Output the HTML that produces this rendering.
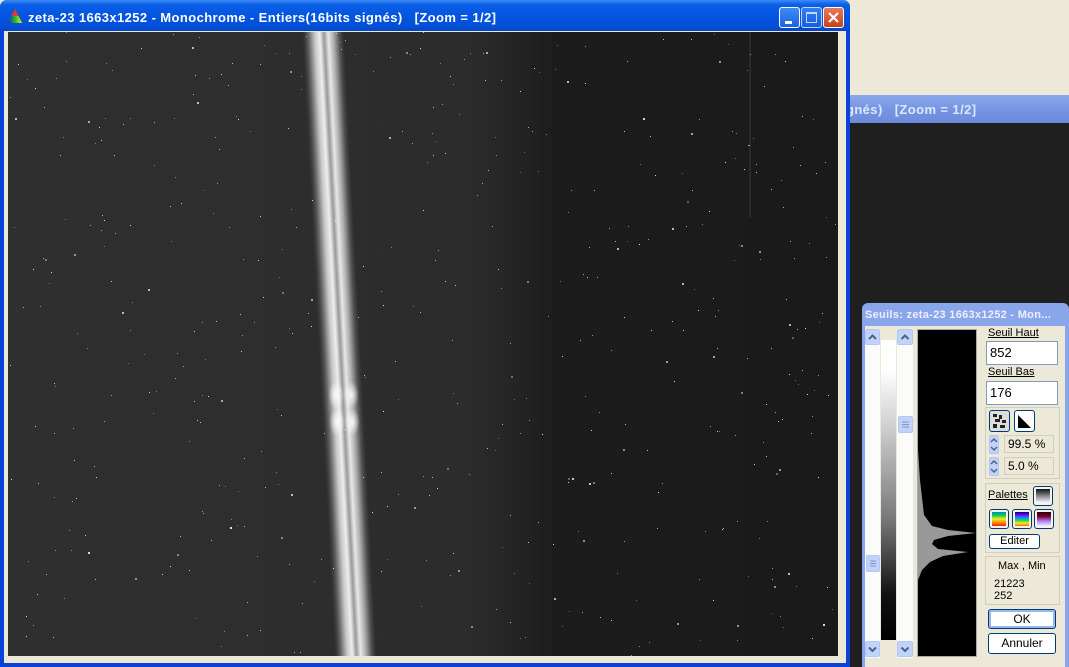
<!DOCTYPE html>
<html><head><meta charset="utf-8">
<style>
*{box-sizing:border-box;margin:0;padding:0}
body{width:1069px;height:667px;overflow:hidden;background:#ECE9D8;position:relative;font-family:"Liberation Sans",sans-serif;font-size:11px}
.abs{position:absolute}
.tb{font-family:"Liberation Sans",sans-serif;font-weight:bold;color:#fff;font-size:13px;white-space:nowrap}
.btn3{position:absolute;border:1px solid #fff;border-radius:3px;width:21px;height:21px}
.sb{position:absolute;background:#C1D3FB;border:1px solid #b4c7f0;border-radius:2px}
.inp{position:absolute;background:#fff;border:1px solid #7F9DB9;font-size:13px;padding-left:3px}
.grp{position:absolute;border:1px solid #d0d0bf}
.xb{position:absolute;background:#fff;border:1px solid #003C74;border-radius:3px;text-align:center;font-size:12px}
.pb{position:absolute;width:19px;height:19px;border:1px solid #003C74;border-radius:3px;background:#f4f3ee;padding:2px}
</style></head><body>

<div class="abs" style="left:846px;top:95px;width:223px;height:28px;background:linear-gradient(#8aa8eb,#7392e0 60%,#6d8bdc);"></div>
<div class="abs tb" style="left:846px;top:102px;color:#dfe7fb;letter-spacing:0.4px">gnés)&nbsp;&nbsp;&nbsp;[Zoom = 1/2]</div>
<div class="abs" style="left:850px;top:123px;width:219px;height:544px;background:#1f1f1f"></div>

<div class="abs" style="left:0;top:0;width:850px;height:667px;background:#0842d6;border-radius:7px 7px 0 0"></div>
<div class="abs" style="left:0;top:0;width:850px;height:31px;border-radius:7px 7px 0 0;background:linear-gradient(#3d8bf7 0%,#0a5fe6 15%,#0455e0 50%,#0350d8 85%,#0245c8 100%)"></div>
<svg class="abs" style="left:7px;top:8px" width="16" height="16"><defs><linearGradient id="rg" x1="0" x2="1"><stop offset="0" stop-color="#22c"/><stop offset=".5" stop-color="#2b2"/><stop offset="1" stop-color="#ee2"/></linearGradient></defs><polygon points="8,1 15,15 1,15" fill="#2a2"/><polygon points="8,1 11.5,8 4.5,8" fill="#e33"/><polygon points="1,15 4.5,8 11.5,8 15,15" fill="url(#rg)"/></svg>
<div class="abs tb" style="left:28px;top:10px;letter-spacing:0.4px">zeta-23 1663x1252 - Monochrome - Entiers(16bits signés)&nbsp;&nbsp;&nbsp;[Zoom = 1/2]</div>
<div class="btn3" style="left:779px;top:7px;background:linear-gradient(#3d8cf6,#1a62e6)"><div class="abs" style="left:5px;top:13px;width:7px;height:3px;background:#fff"></div></div>
<div class="btn3" style="left:801px;top:7px;background:linear-gradient(#3d8cf6,#1a62e6);opacity:.75"><div class="abs" style="left:4px;top:4px;width:11px;height:11px;border:1px solid #fff;border-top-width:2px"></div></div>
<div class="btn3" style="left:823px;top:7px;background:linear-gradient(#e8795a,#c7401c)"><svg width="19" height="19"><path d="M5 5L14 14M14 5L5 14" stroke="#fff" stroke-width="2.2"/></svg></div>
<div class="abs" style="left:4px;top:31px;width:842px;height:632px;background:#ECE9D8"></div>

<svg class="abs" style="left:8px;top:32px" width="830" height="624">
<defs>
<linearGradient id="bg" x1="0" x2="1"><stop offset="0" stop-color="#2f2f2f"/><stop offset=".55" stop-color="#2c2c2c"/><stop offset=".6" stop-color="#262626"/><stop offset=".66" stop-color="#1c1c1c"/><stop offset="1" stop-color="#1a1a1a"/></linearGradient>
<linearGradient id="beam" x1="0" x2="1"><stop offset="0" stop-color="#444" stop-opacity="0"/><stop offset=".15" stop-color="#666"/><stop offset=".3" stop-color="#c8c8c8"/><stop offset=".42" stop-color="#eee"/><stop offset=".52" stop-color="#999"/><stop offset=".62" stop-color="#e8e8e8"/><stop offset=".75" stop-color="#aaa"/><stop offset=".88" stop-color="#555"/><stop offset="1" stop-color="#444" stop-opacity="0"/></linearGradient>
<radialGradient id="glow"><stop offset="0" stop-color="#fff" stop-opacity=".9"/><stop offset="1" stop-color="#fff" stop-opacity="0"/></radialGradient>
</defs>
<rect width="830" height="624" fill="url(#bg)"/>
<g transform="skewX(3.0)">
<rect x="294" y="0" width="42" height="624" fill="url(#beam)"/>
</g>
<ellipse cx="328" cy="363" rx="8" ry="14" fill="url(#glow)"/>
<ellipse cx="343" cy="363" rx="8" ry="14" fill="url(#glow)"/>
<ellipse cx="329" cy="390" rx="8" ry="14" fill="url(#glow)"/>
<ellipse cx="344" cy="390" rx="8" ry="14" fill="url(#glow)"/>
<line x1="742" y1="0" x2="742" y2="185" stroke="#3a3a3a" stroke-width="1"/>
<g id="stars" fill="#ddd"></g>
</svg>

<div class="abs" style="left:862px;top:303px;width:207px;height:364px;background:#8aa6eb;border-radius:6px 6px 0 0"></div>
<div class="abs tb" style="left:865px;top:309px;font-size:11px;color:#eef;width:198px;overflow:hidden;letter-spacing:0.3px">Seuils: zeta-23 1663x1252 - Mon...</div>
<div class="abs" style="left:865px;top:326px;width:200px;height:341px;background:#ECE9D8"></div>
<div class="abs" style="left:865px;top:329px;width:15px;height:329px;background:#fbfbf9"></div>
<div class="sb" style="left:865px;top:329px;width:15px;height:16px"><svg width="13" height="14"><path d="M3 9L6.5 5.5L10 9" stroke="#4d6185" stroke-width="2" fill="none"/></svg></div>
<div class="sb" style="left:866px;top:555px;width:14px;height:17px"><svg width="12" height="15"><path d="M3 5h6M3 7.5h6M3 10h6" stroke="#7e95c4"/></svg></div>
<div class="sb" style="left:865px;top:641px;width:15px;height:16px"><svg width="13" height="14"><path d="M3 5.5L6.5 9L10 5.5" stroke="#4d6185" stroke-width="2" fill="none"/></svg></div>
<div class="abs" style="left:881px;top:340px;width:15px;height:300px;background:linear-gradient(#fff 0%,#fff 10%,#ccc 30%,#777 60%,#111 85%,#000 100%)"></div>
<div class="abs" style="left:897px;top:329px;width:16px;height:329px;background:#fbfbf9"></div>
<div class="sb" style="left:897px;top:329px;width:16px;height:16px"><svg width="14" height="14"><path d="M3.5 9L7 5.5L10.5 9" stroke="#4d6185" stroke-width="2" fill="none"/></svg></div>
<div class="sb" style="left:898px;top:416px;width:15px;height:17px"><svg width="13" height="15"><path d="M3 5h7M3 7.5h7M3 10h7" stroke="#7e95c4"/></svg></div>
<div class="sb" style="left:897px;top:641px;width:16px;height:16px"><svg width="14" height="14"><path d="M3.5 5.5L7 9L10.5 5.5" stroke="#4d6185" stroke-width="2" fill="none"/></svg></div>
<div class="abs" style="left:917px;top:329px;width:60px;height:328px;background:#000;border:1px solid #aaa"></div>
<svg class="abs" style="left:918px;top:330px" width="58" height="326"><path d="M0 120 L2 150 L6 185 L14 196 L30 200 L58 203 L30 206 L16 210 L14 214 L20 219 L50 222 L25 226 L12 232 L4 240 L0 250 Z" fill="#999"/></svg>
<div class="abs" style="left:988px;top:327px;font-size:11px;text-decoration:underline">Seuil Haut</div>
<div class="inp" style="left:986px;top:341px;width:72px;height:24px;line-height:22px">852</div>
<div class="abs" style="left:988px;top:366px;font-size:11px;text-decoration:underline">Seuil Bas</div>
<div class="inp" style="left:986px;top:381px;width:72px;height:24px;line-height:22px">176</div>
<div class="grp" style="left:985px;top:407px;width:75px;height:72px"></div>
<div class="pb" style="left:989px;top:410px;width:21px;height:22px;background:#ddd"><svg width="15" height="16"><g fill="#222"><rect x="1" y="1" width="4" height="3"/><rect x="7" y="2" width="3" height="4"/><rect x="3" y="6" width="5" height="3"/><rect x="10" y="7" width="4" height="3"/><rect x="1" y="11" width="4" height="4"/><rect x="8" y="12" width="5" height="3"/></g></svg></div>
<div class="pb" style="left:1014px;top:410px;width:21px;height:22px;background:#fff"><svg width="15" height="16"><polygon points="1,2 14,15 1,15" fill="#000"/></svg></div>
<div class="sb" style="left:989px;top:435px;width:10px;height:19px"><svg width="8" height="17"><path d="M1 6L4 3L7 6M1 11L4 14L7 11" stroke="#4d6185" stroke-width="1.5" fill="none"/></svg></div>
<div class="abs" style="left:1004px;top:435px;width:50px;height:18px;border:1px solid #d0d0bf;font-size:12px;padding-left:3px;line-height:16px">99.5 %</div>
<div class="sb" style="left:989px;top:457px;width:10px;height:19px"><svg width="8" height="17"><path d="M1 6L4 3L7 6M1 11L4 14L7 11" stroke="#4d6185" stroke-width="1.5" fill="none"/></svg></div>
<div class="abs" style="left:1004px;top:457px;width:50px;height:18px;border:1px solid #d0d0bf;font-size:12px;padding-left:3px;line-height:16px">5.0 %</div>
<div class="grp" style="left:985px;top:483px;width:75px;height:70px"></div>
<div class="abs" style="left:988px;top:489px;font-size:11px;text-decoration:underline">Palettes</div>
<div class="pb" style="left:1033px;top:486px;width:20px;height:20px"><div style="width:100%;height:100%;background:linear-gradient(#111,#fff)"></div></div>
<div class="pb" style="left:989px;top:509px;width:20px;height:20px"><div style="width:100%;height:100%;background:linear-gradient(#08c,#1c4,#ee2,#f80,#e22)"></div></div>
<div class="pb" style="left:1012px;top:509px;width:20px;height:20px"><div style="width:100%;height:100%;background:linear-gradient(#006,#70f,#18f,#2d4,#ee2,#f60)"></div></div>
<div class="pb" style="left:1034px;top:509px;width:20px;height:20px"><div style="width:100%;height:100%;background:linear-gradient(#200,#803,#a8f,#eef)"></div></div>
<div class="xb" style="left:989px;top:534px;width:51px;height:15px;line-height:13px;font-size:11px">Editer</div>
<div class="grp" style="left:985px;top:556px;width:75px;height:49px"></div>
<div class="abs" style="left:998px;top:560px;font-size:11px">Max , Min</div>
<div class="abs" style="left:994px;top:578px;font-size:11px;line-height:12px">21223<br>252</div>
<div class="xb" style="left:988px;top:609px;width:68px;height:20px;line-height:18px;box-shadow:inset 0 0 0 2px #98b8f0">OK</div>
<div class="xb" style="left:988px;top:633px;width:68px;height:21px;line-height:19px">Annuler</div>
<div class="abs" style="left:1065px;top:326px;width:4px;height:341px;background:#8aa6eb"></div>
<div class="abs" style="left:862px;top:326px;width:3px;height:341px;background:#8aa6eb"></div>

<script>
(function(){var g=document.getElementById('stars'),s=12345;function r(){s=(s*16807)%2147483647;return s/2147483647}
var h='';for(var i=0;i<500;i++){var x=r()*830,y=r()*624,o=(0.35+r()*0.65).toFixed(2),w=r()<0.15?2:1;h+='<rect x="'+x.toFixed(0)+'" y="'+y.toFixed(0)+'" width="'+w+'" height="'+w+'" opacity="'+o+'"/>';}
g.innerHTML=h;})();
</script>
</body></html>
